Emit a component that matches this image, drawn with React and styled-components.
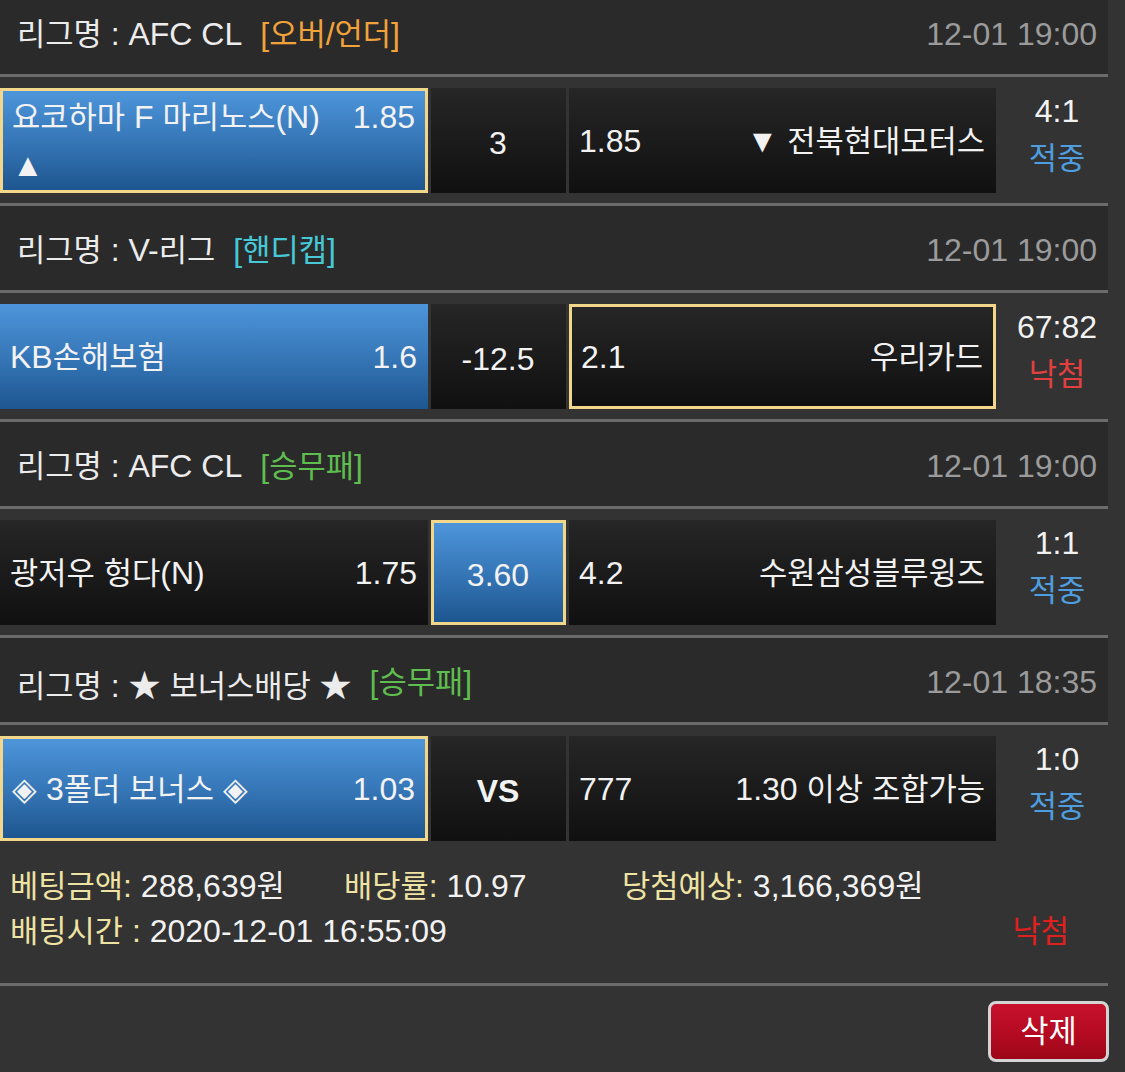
import React from "react";
import styled, { createGlobalStyle } from "styled-components";

const GlobalStyle = createGlobalStyle`
  html, body {
    margin: 0;
    padding: 0;
    background: #333333;
  }
`;

const HANGUL = /([\u1100-\u11FF\u3130-\u318F\uAC00-\uD7AF]+)/;

// hangul runs get their own size so they sit like the phone's system font
const T = ({ children }) => (
  <span>
    {String(children)
      .split(HANGUL)
      .map((part, i) => (HANGUL.test(part) ? <Ko key={i}>{part}</Ko> : part))}
  </span>
);

const Ko = styled.span`
  font-family: "Noto Sans CJK KR", sans-serif;
  font-size: 0.96em;
  line-height: 1;
`;

const tones = {
  orange: "#f1a23a",
  cyan: "#46c8d6",
  green: "#5fbd4f",
};

const matches = [
  {
    league: "AFC CL",
    market: "[오버/언더]",
    tone: "orange",
    time: "12-01 19:00",
    home: { name: "요코하마 F 마리노스(N)", odds: "1.85", sub: "▲" },
    center: "3",
    away: { odds: "1.85", name: "▼ 전북현대모터스" },
    blue: "home",
    pick: "home",
    score: "4:1",
    result: "적중",
  },
  {
    league: "V-리그",
    market: "[핸디캡]",
    tone: "cyan",
    time: "12-01 19:00",
    home: { name: "KB손해보험", odds: "1.6" },
    center: "-12.5",
    away: { odds: "2.1", name: "우리카드" },
    blue: "home",
    pick: "away",
    score: "67:82",
    result: "낙첨",
  },
  {
    league: "AFC CL",
    market: "[승무패]",
    tone: "green",
    time: "12-01 19:00",
    home: { name: "광저우 헝다(N)", odds: "1.75" },
    center: "3.60",
    away: { odds: "4.2", name: "수원삼성블루윙즈" },
    blue: "center",
    pick: "center",
    score: "1:1",
    result: "적중",
  },
  {
    league: "★ 보너스배당 ★",
    market: "[승무패]",
    tone: "green",
    time: "12-01 18:35",
    home: { name: "◈ 3폴더 보너스 ◈", odds: "1.03" },
    center: "VS",
    centerBold: true,
    away: { odds: "777", name: "1.30 이상 조합가능" },
    blue: "home",
    pick: "home",
    score: "1:0",
    result: "적중",
  },
];

const App = () => (
  <>
    <GlobalStyle />
    <Page>
      {matches.map((m, i) => (
        <React.Fragment key={i}>
          <Header>
            <League>
              <T>{`리그명 : ${m.league}`}</T>
              <Market $tone={m.tone}>
                <T>{m.market}</T>
              </Market>
            </League>
            <Time>{m.time}</Time>
          </Header>
          <Divider />
          <Row>
            <Cell $blue={m.blue === "home"} $picked={m.pick === "home"}>
              <Line>
                <T>{m.home.name}</T>
                <span>{m.home.odds}</span>
              </Line>
              {m.home.sub && <Line>{m.home.sub}</Line>}
            </Cell>
            <Cell
              $blue={m.blue === "center"}
              $picked={m.pick === "center"}
              $center
            >
              <CenterText $bold={m.centerBold}>{m.center}</CenterText>
            </Cell>
            <Cell $blue={m.blue === "away"} $picked={m.pick === "away"}>
              <Line>
                <span>{m.away.odds}</span>
                <T>{m.away.name}</T>
              </Line>
            </Cell>
            <Score>
              <span>{m.score}</span>
              <Result $hit={m.result === "적중"}>
                <T>{m.result}</T>
              </Result>
            </Score>
          </Row>
          {i < matches.length - 1 && <Divider />}
        </React.Fragment>
      ))}
      <Summary>
        <SummaryLine>
          <span>
            <Label>
              <T>베팅금액: </T>
            </Label>
            <T>288,639원</T>
          </span>
          <span>
            <Label>
              <T>배당률: </T>
            </Label>
            10.97
          </span>
          <span>
            <Label>
              <T>당첨예상: </T>
            </Label>
            <T>3,166,369원</T>
          </span>
        </SummaryLine>
        <SummaryFoot>
          <span>
            <Label>
              <T>배팅시간 : </T>
            </Label>
            2020-12-01 16:55:09
          </span>
          <Lost>
            <T>낙첨</T>
          </Lost>
        </SummaryFoot>
      </Summary>
      <Divider />
      <Actions>
        <DeleteButton>
          <T>삭제</T>
        </DeleteButton>
      </Actions>
    </Page>
  </>
);

const Page = styled.div`
  margin-top: -10px;
  width: 1125px;
  background: #333333;
  font-family: "Liberation Sans", Arial, "Noto Sans CJK KR", sans-serif;
  font-size: 32px;
  color: #f2f2f2;
`;

const Header = styled.div`
  width: 1108px;
  height: 84px;
  box-sizing: border-box;
  padding: 5px 11px 0 17px;
  background: #2a2a2a;
  display: flex;
  align-items: center;
  justify-content: space-between;
  white-space: nowrap;
`;

const League = styled.div`
  display: flex;
  align-items: center;
  gap: 18px;
  color: #ececec;
`;

const Market = styled.span`
  color: ${(p) => tones[p.$tone]};
`;

const Time = styled.div`
  color: #9b9b9b;
`;

const Divider = styled.div`
  width: 1108px;
  height: 3px;
  background: #6b6b6b;
`;

const Row = styled.div`
  display: grid;
  grid-template-columns: 428px 135px 427px 116px;
  grid-template-rows: 105px;
  column-gap: 3px;
  padding: 11px 0 10px;
`;

const Cell = styled.div`
  height: 105px;
  box-sizing: border-box;
  display: flex;
  flex-direction: column;
  justify-content: center;
  align-items: ${(p) => (p.$center ? "center" : "stretch")};
  padding: ${(p) => (p.$picked ? "0 10px 0 9px" : "0 11px 0 10px")};
  border: ${(p) => (p.$picked ? "3px solid #f2d68a" : "none")};
  background: ${(p) =>
    p.$blue
      ? "linear-gradient(to bottom, #4d95da 0%, #3677b8 50%, #1e5690 100%)"
      : "linear-gradient(to bottom, #262626 0%, #1a1a1a 55%, #101010 100%)"};
  line-height: 48px;
`;

const Line = styled.div`
  display: flex;
  justify-content: space-between;
  align-items: center;
  white-space: nowrap;
`;

const CenterText = styled.div`
  padding-top: 4px;
  font-weight: ${(p) => (p.$bold ? 700 : 400)};
`;

const Score = styled.div`
  height: 105px;
  box-sizing: border-box;
  display: flex;
  flex-direction: column;
  align-items: center;
  justify-content: center;
  line-height: 47px;
  padding-bottom: 12px;
`;

const Result = styled.span`
  color: ${(p) => (p.$hit ? "#4e9ddf" : "#e2403f")};
`;

const Summary = styled.div`
  padding: 13px 0 29px 10px;
  line-height: 45px;
  white-space: nowrap;
`;

const SummaryLine = styled.div`
  display: grid;
  grid-template-columns: 334px 278px auto;
`;

const SummaryFoot = styled.div`
  display: flex;
  justify-content: space-between;
  padding-right: 56px;
`;

const Label = styled.span`
  color: #efe3a4;
`;

const Lost = styled.span`
  color: #e0201f;
`;

const Actions = styled.div`
  display: flex;
  justify-content: flex-end;
  padding: 15px 16px 10px 0;
`;

const DeleteButton = styled.button`
  width: 121px;
  height: 61px;
  box-sizing: border-box;
  border: 3px solid #d4d4d4;
  border-radius: 8px;
  background: linear-gradient(to bottom, #c8112c 0%, #b20a20 60%, #9c0618 100%);
  color: #ffffff;
  font-family: inherit;
  font-size: 32px;
  padding: 0;
  cursor: pointer;
`;

export default App;
